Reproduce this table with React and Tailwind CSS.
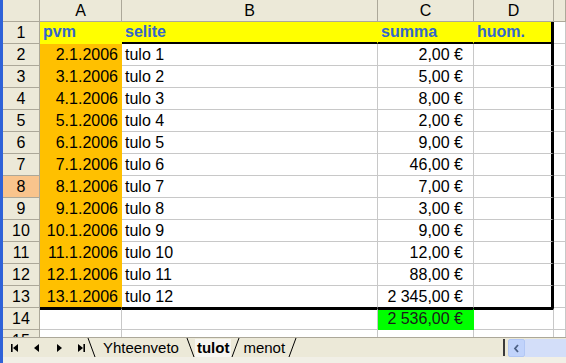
import React from "react";

const dates = [
  "2.1.2006", "3.1.2006", "4.1.2006", "5.1.2006", "6.1.2006", "7.1.2006",
  "8.1.2006", "9.1.2006", "10.1.2006", "11.1.2006", "12.1.2006", "13.1.2006",
];
const sums = [
  "2,00 €", "5,00 €", "8,00 €", "2,00 €", "9,00 €", "46,00 €",
  "7,00 €", "3,00 €", "9,00 €", "12,00 €", "88,00 €", "2 345,00 €",
];

const hdr =
  "h-[22px] box-border bg-[#ECE9D8] border-r border-b border-[#ACA899] flex items-center justify-center leading-[16px]";
const cell =
  "h-[22px] box-border border-r border-b border-[#C8C8C8] bg-white flex items-end leading-[16px] whitespace-nowrap overflow-hidden";

function NavIcon({ kind }) {
  return (
    <svg width="10" height="10" viewBox="0 0 10 10">
      {kind === "first" && (
        <>
          <rect x="1" y="1" width="1.6" height="8" fill="#000" />
          <polygon points="8,1 3,5 8,9" fill="#000" />
        </>
      )}
      {kind === "prev" && <polygon points="7,1 2,5 7,9" fill="#000" />}
      {kind === "next" && <polygon points="3,1 8,5 3,9" fill="#000" />}
      {kind === "last" && (
        <>
          <polygon points="2,1 7,5 2,9" fill="#000" />
          <rect x="7.4" y="1" width="1.6" height="8" fill="#000" />
        </>
      )}
    </svg>
  );
}

function Slant({ dir }) {
  return (
    <svg width="9" height="20" viewBox="0 0 9 20" className="shrink-0">
      {dir === "back" ? (
        <line x1="1" y1="0" x2="8" y2="19" stroke="#000" strokeWidth="1" />
      ) : (
        <line x1="1" y1="19" x2="8" y2="0" stroke="#000" strokeWidth="1" />
      )}
    </svg>
  );
}

export default function App() {
  const rows = [];

  // row 1 (yellow header)
  rows.push(
    <React.Fragment key="r1">
      <div className={hdr}>1</div>
      <div className={cell + " !bg-[#FFFF00] !border-[#FFFF00] pl-[3px] pb-[3px] font-bold text-[#3366CC]"}>pvm</div>
      <div className={cell + " !bg-[#FFFF00] !border-r-[#FFFF00] border-b-2 !border-b-black pl-[3px] pb-[2px] font-bold text-[#3366CC]"}>selite</div>
      <div className={cell + " !bg-[#FFFF00] !border-r-[#FFFF00] border-b-2 !border-b-black pl-[3px] pb-[2px] font-bold text-[#3366CC]"}>summa</div>
      <div className={cell + " !bg-[#FFFF00] border-r-[3px] !border-r-black border-b-2 !border-b-black pl-[3px] pb-[2px] font-bold text-[#3366CC]"}>huom.</div>
      <div className={cell}></div>
    </React.Fragment>
  );

  dates.forEach((d, i) => {
    const n = i + 2;
    const last = n === 13;
    rows.push(
      <React.Fragment key={d}>
        <div className={hdr + (n === 8 ? " !bg-[#F9C48C]" : "")}>{n}</div>
        <div className={cell + " !bg-[#FFC000] !border-r-[#FFC000] justify-end pr-[3px] pb-[2px] " + (last ? "!border-b-black" : "!border-b-[#FFC000]")}>{d}</div>
        <div className={cell + " pl-[3px] pb-[2px] " + (last ? "!border-b-black" : "")}>{"tulo " + (i + 1)}</div>
        <div className={cell + " justify-end pr-[10px] pb-[2px] " + (last ? "!border-b-black" : "")}>{sums[i]}</div>
        <div className={cell + " border-r-[3px] !border-r-black " + (last ? "!border-b-black" : "")}></div>
        <div className={cell}></div>
      </React.Fragment>
    );
  });

  // row 14 (total)
  rows.push(
    <React.Fragment key="r14">
      <div className={hdr}>14</div>
      <div className={cell + " border-t-2 !border-t-black"}></div>
      <div className={cell + " border-t-2 !border-t-black"}></div>
      <div className={cell + " border-t-2 !border-t-black !bg-[#00FF00] !border-r-[#00FF00] !border-b-[#00FF00] justify-end pr-[10px] pb-[2px] text-[#1a1a1a]"}>2 536,00 €</div>
      <div className={cell + " border-t-2 !border-t-black"}></div>
      <div className={cell}></div>
    </React.Fragment>
  );

  // row 15 (partly visible)
  rows.push(
    <React.Fragment key="r15">
      <div className={hdr}>15</div>
      <div className={cell}></div>
      <div className={cell}></div>
      <div className={cell}></div>
      <div className={cell}></div>
      <div className={cell}></div>
    </React.Fragment>
  );

  return (
    <div
      className="w-[566px] h-[363px] flex overflow-hidden bg-[#ECE9D8] text-black"
      style={{ fontFamily: '"Liberation Sans", Arial, sans-serif' }}
    >
      <div className="w-[3px] h-full bg-[#2F62D8] shrink-0"></div>
      <div className="w-[563px] flex flex-col">
        {/* sheet */}
        <div className="h-[337px] overflow-hidden text-[16px]">
          <div className="grid grid-cols-[37px_82px_256px_96px_80px_12px]">
            <div className={hdr}></div>
            <div className={hdr}>A</div>
            <div className={hdr}>B</div>
            <div className={hdr}>C</div>
            <div className={hdr}>D</div>
            <div className={hdr}></div>
            {rows}
          </div>
        </div>

        {/* sheet tabs + scrollbar */}
        <div className="h-[20px] flex items-stretch border-t border-[#ACA899] text-[15px]">
          <div className="w-[84px] flex items-center pl-[7px] gap-[12px]">
            <NavIcon kind="first" />
            <NavIcon kind="prev" />
            <NavIcon kind="next" />
            <NavIcon kind="last" />
          </div>
          <div className="flex items-center">
            <Slant dir="back" />
            <span className="px-[7px] leading-[18px]">Yhteenveto</span>
            <Slant dir="back" />
            <span className="px-[2px] font-bold leading-[18px] bg-[#F7F6F1]">tulot</span>
            <Slant dir="fwd" />
            <span className="px-[3px] leading-[18px]">menot</span>
            <Slant dir="fwd" />
          </div>
          <div className="flex-1"></div>
          <div className="w-[2px] bg-[#3A3A3A] my-[1px]"></div>
          <div className="w-[3px]"></div>
          <div className="w-[17px] bg-[#C1D3FB] border border-[#B2C7F5] rounded-[2px] flex items-center justify-center mt-[1px]">
            <svg width="7" height="9" viewBox="0 0 7 9">
              <polyline points="5,1 2,4.5 5,8" fill="none" stroke="#4D6185" strokeWidth="1.8" />
            </svg>
          </div>
          <div className="w-[41px] bg-[#D3DEF9] mt-[1px]"></div>
        </div>
        <div className="flex-1 bg-[#F1EFE6]"></div>
      </div>
    </div>
  );
}
